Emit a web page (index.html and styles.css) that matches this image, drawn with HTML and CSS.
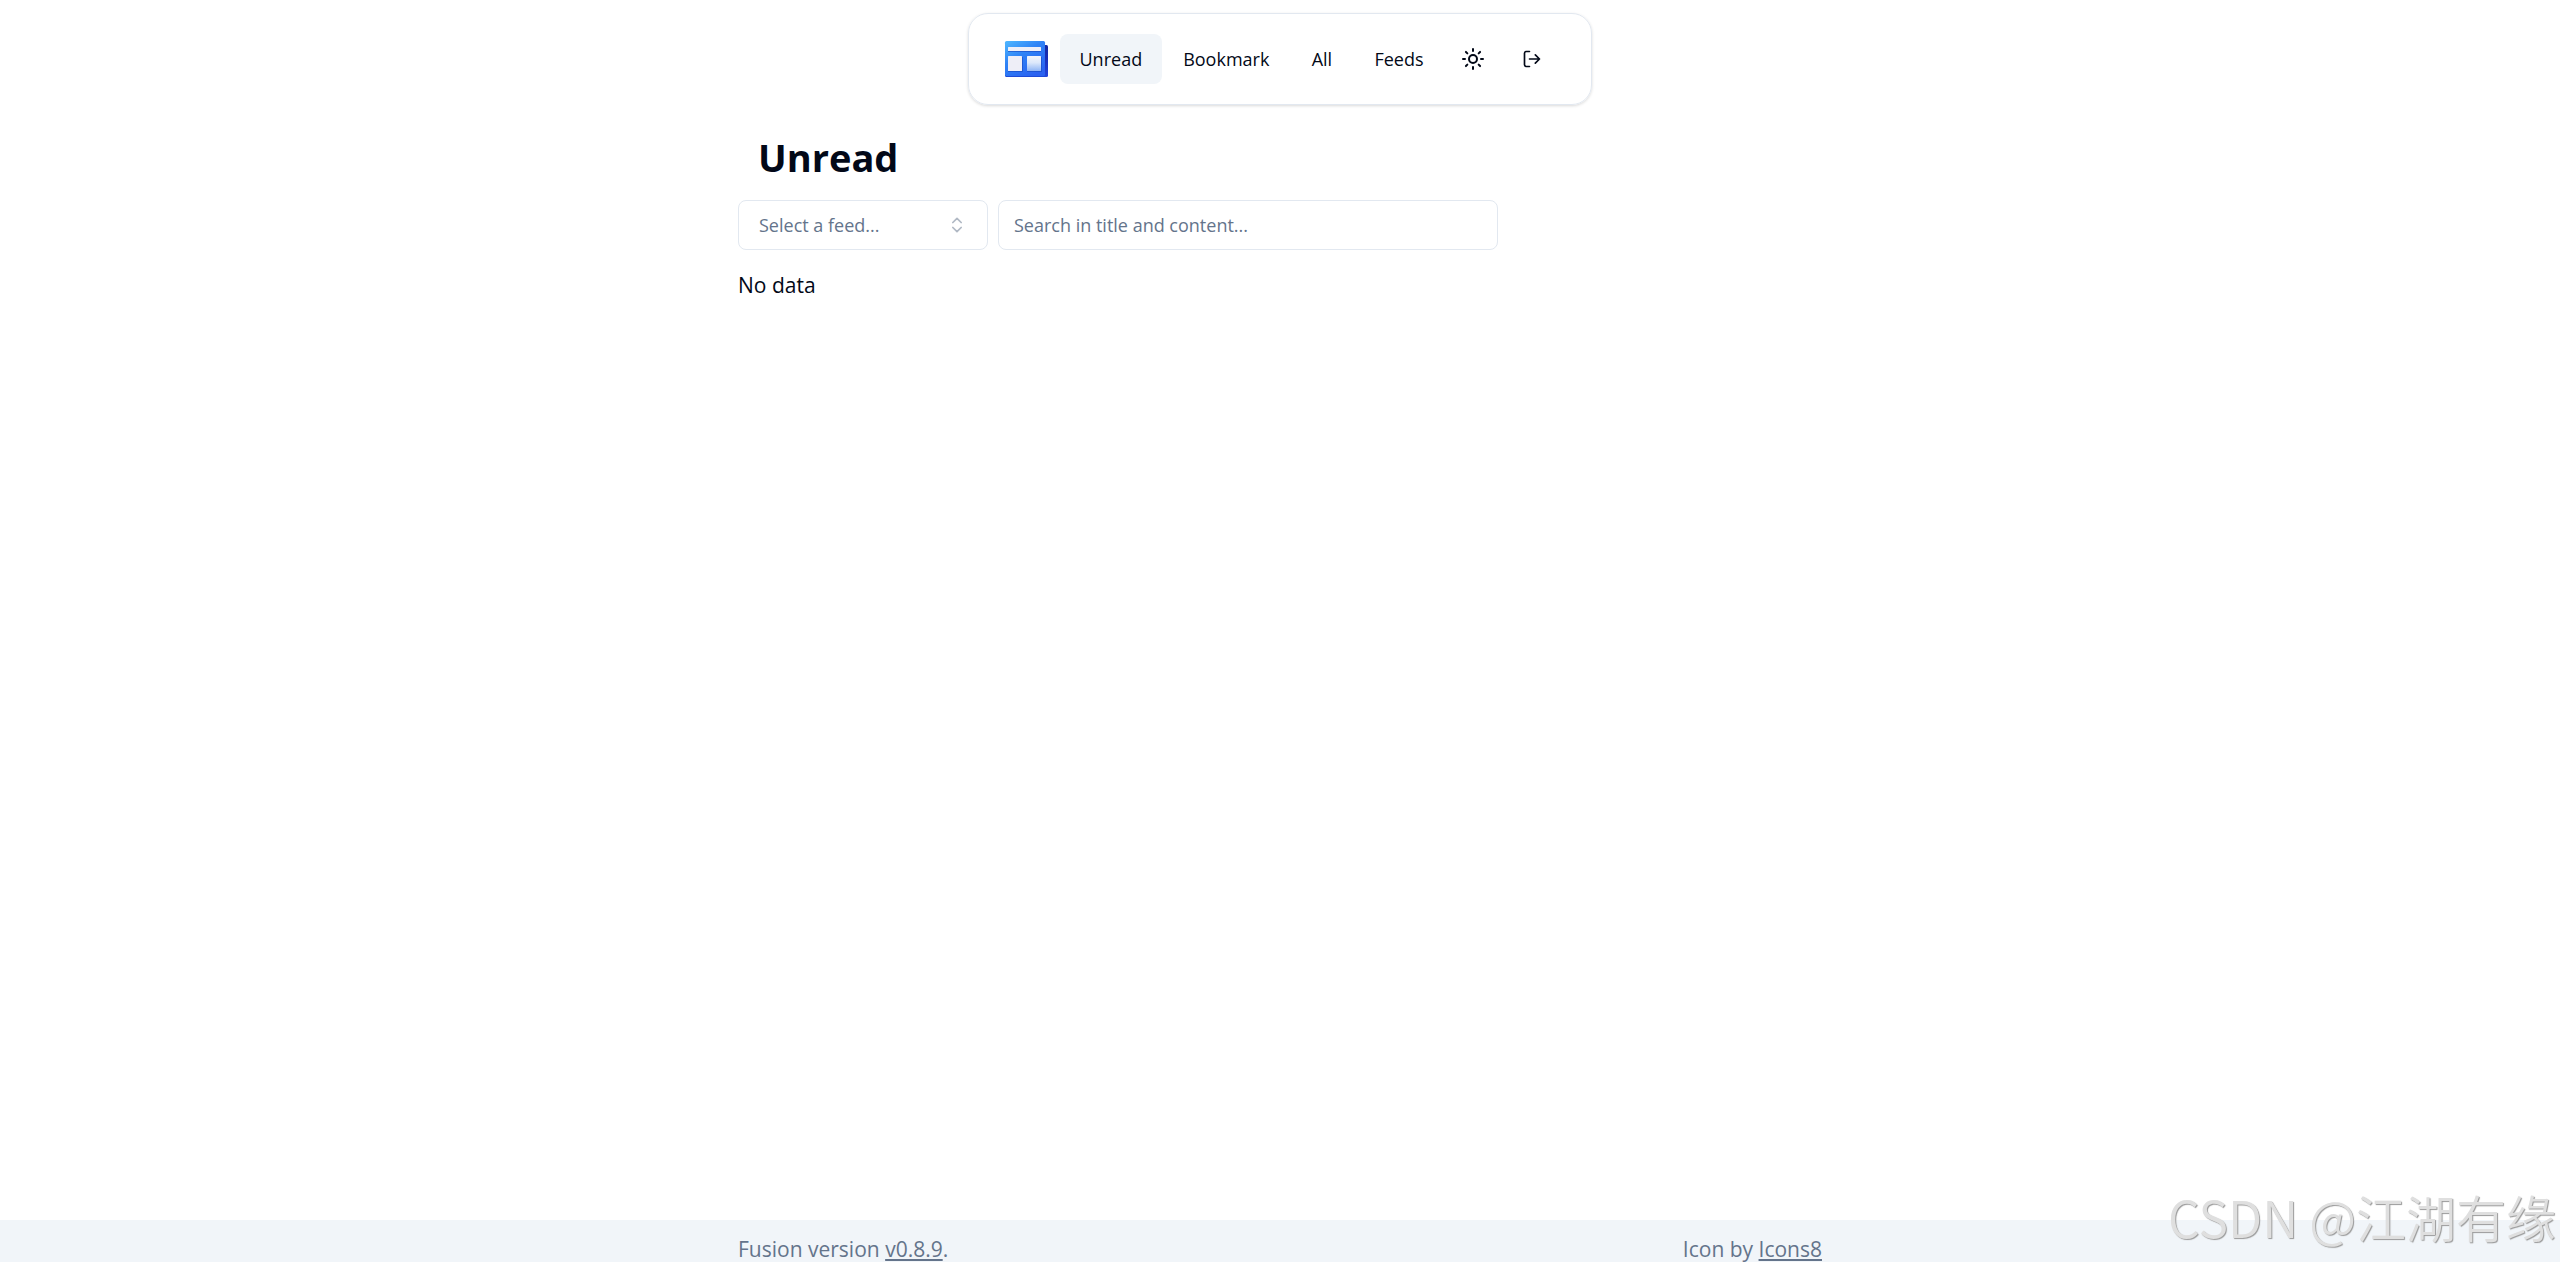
FILE: index.html
```html
<!DOCTYPE html>
<html lang="en">
<head>
<meta charset="utf-8">
<meta name="viewport" content="width=device-width, initial-scale=1">
<title>Fusion</title>
<link rel="stylesheet" href="styles.css">
</head>
<body>
<header class="header">
  <nav class="nav">
    <a class="logo" href="#" aria-label="Fusion">
      <svg viewBox="0 0 46 38" width="46" height="38">
        <defs>
          <linearGradient id="frame" x1="0" y1="0" x2=".7" y2="1"><stop offset="0" stop-color="#50b8ff"/><stop offset=".45" stop-color="#2f83f6"/><stop offset="1" stop-color="#2a62f0"/></linearGradient>
          <linearGradient id="side" x1="0" y1="0" x2="0" y2="1"><stop offset="0" stop-color="#1428a0"/><stop offset=".5" stop-color="#1a31bd"/><stop offset="1" stop-color="#2347dc"/></linearGradient>
          <linearGradient id="pane" x1="0" y1="0" x2="0" y2="1"><stop offset="0" stop-color="#f4f5fa"/><stop offset=".45" stop-color="#dce8fb"/><stop offset="1" stop-color="#8fb5f5"/></linearGradient>
        </defs>
        <rect x="30" y="5" width="14" height="32" rx="1.5" fill="url(#side)"/>
        <rect x="1" y="2" width="40" height="35" rx="1.5" fill="#1d4bd8"/>
        <rect x="1" y="1" width="40" height="35" rx="1.5" fill="url(#frame)"/>
        <path d="M4 9h33v3H4zM4 17h15v15H4zM23 17h15v15H23z" fill="#174bc4" opacity=".65"/>
        <rect x="4" y="7" width="33" height="4" rx=".5" fill="#eeeff8"/>
        <rect x="4" y="16" width="14" height="15" rx=".5" fill="#eeeef7"/>
        <rect x="23" y="16" width="14" height="15" rx=".5" fill="url(#pane)"/>
      </svg>
    </a>
    <a class="nav-link active" href="#">Unread</a>
    <a class="nav-link" href="#">Bookmark</a>
    <a class="nav-link" href="#">All</a>
    <a class="nav-link" href="#">Feeds</a>
    <button class="icon-button" type="button" aria-label="Toggle theme">
      <svg class="icon" viewBox="0 0 24 24" width="24" height="24"><circle cx="12" cy="12" r="4"/><path d="M12 2v2M12 20v2M4.93 4.93l1.41 1.41M17.66 17.66l1.41 1.41M2 12h2M20 12h2M6.34 17.66l-1.41 1.41M19.07 4.93l-1.41 1.41"/></svg>
    </button>
    <button class="icon-button" type="button" aria-label="Log out">
      <svg class="icon" viewBox="0 0 24 24" width="20" height="20"><path d="M9 21H5a2 2 0 0 1-2-2V5a2 2 0 0 1 2-2h4M16 17l5-5-5-5M21 12H9"/></svg>
    </button>
  </nav>
</header>
<main class="main">
  <h1 class="title">Unread</h1>
  <div class="filters">
    <button class="feed-select" type="button" role="combobox" aria-expanded="false" aria-label="Select a feed">
      <span>Select a feed...</span>
      <svg class="icon chevrons" viewBox="0 0 24 24" width="20" height="20"><path d="M7 15l5 5 5-5M7 9l5-5 5 5"/></svg>
    </button>
    <input class="search" type="search" aria-label="Search" placeholder="Search in title and content...">
  </div>
  <p class="empty">No data</p>
</main>
<footer class="footer">
  <div class="footer-inner">
    <p>Fusion version <a href="#">v0.8.9</a>.</p>
    <p>Icon by <a href="#">Icons8</a></p>
  </div>
</footer>
<div class="watermark">CSDN @江湖有缘</div>
</body>
</html>
```
FILE: styles.css
```css
* { box-sizing: border-box; }

body {
  margin: 0;
  min-height: 100vh;
  display: flex;
  flex-direction: column;
  background: #fff;
  color: #020817;
  font: 21px/30px "Open Sans", "Noto Sans", sans-serif;
}

p, h1 { margin: 0; }
a { color: inherit; }
button, input { font: inherit; color: inherit; }

.header {
  display: flex;
  justify-content: center;
  padding-top: 13px;
}

.nav {
  display: flex;
  align-items: center;
  gap: 1px;
  padding: 20px 30px 20px 35px;
  border: 1px solid #e2e8f0;
  border-radius: 20px;
  box-shadow: 0 1px 3px rgba(0, 0, 0, .15);
}

.logo {
  display: flex;
  padding-right: 9px;
}

.nav-link {
  min-width: 63px;
  padding: 10px 20px;
  border-radius: 8px;
  font-size: 18px;
  text-align: center;
  text-decoration: none;
}

.active { background: #f1f5f9; }

.icon-button {
  display: grid;
  place-items: center;
  width: 58px;
  height: 50px;
  padding: 0;
  border: 0;
  background: none;
}

.icon {
  fill: none;
  stroke: currentColor;
  stroke-width: 2;
  stroke-linecap: round;
  stroke-linejoin: round;
}

.main, .footer-inner {
  width: 100%;
  max-width: 1084px;
  margin: 0 auto;
}

.main {
  flex: 1;
  padding-top: 27px;
}

.title {
  padding: 0 20px;
  font-size: 38px;
  line-height: 50px;
}

.filters {
  display: flex;
  gap: 10px;
  margin: 18px 0 20px;
  color: #64748b;
  font-size: 18px;
}

.feed-select, .search {
  height: 50px;
  border: 1px solid #e2e8f0;
  border-radius: 8px;
  background: #fff;
}

.feed-select {
  display: flex;
  align-items: center;
  justify-content: space-between;
  width: 250px;
  padding: 0 20px;
}

.chevrons { opacity: .5; }

.search {
  width: 500px;
  padding: 0 15px;
  appearance: none;
}

.search::placeholder {
  color: #64748b;
  opacity: 1;
}

.footer {
  padding: 16px 0 0;
  background: #f1f5f9;
  color: #64748b;
}

.footer-inner {
  display: flex;
  justify-content: space-between;
}

.footer p { line-height: 26px; }

.watermark {
  position: absolute;
  right: 4px;
  bottom: 10px;
  color: #dfdfdf;
  font: 350 50px/72px "Noto Sans CJK SC", sans-serif;
  text-shadow: 1px 1px 1px #999;
  pointer-events: none;
}
```
